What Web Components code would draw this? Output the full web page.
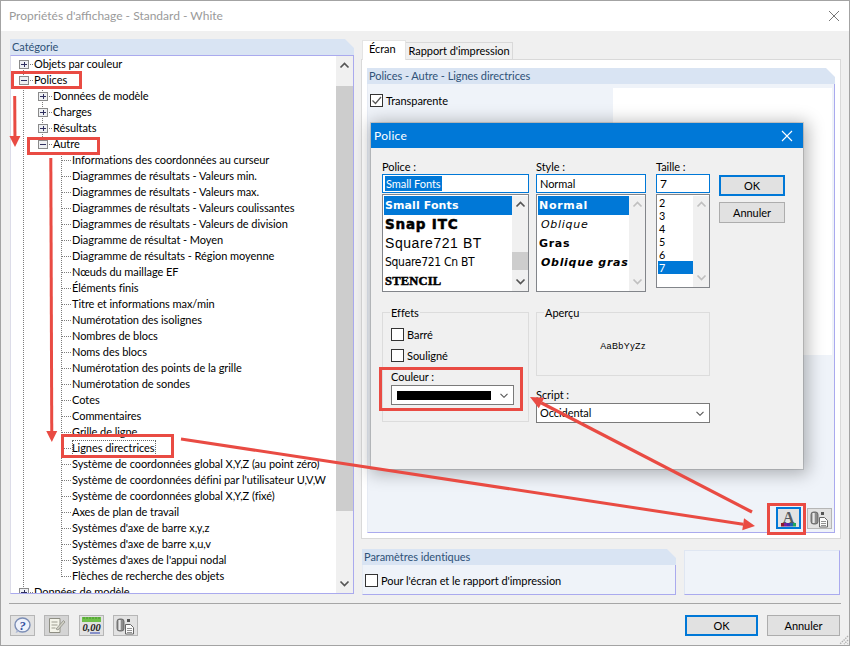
<!DOCTYPE html>
<html lang="fr">
<head>
<meta charset="utf-8">
<title>Propriétés d'affichage</title>
<style>
  html,body{margin:0;padding:0;background:#f0f0f0}
  body{font:11px/16px Lato,"Liberation Sans",sans-serif;letter-spacing:-.05px;color:#000}
</style>
</head>
<body>
<rf-window>
  <span slot="title">Propriétés d'affichage - Standard - White</span>

  <rf-tree slot="tree" heading="Catégorie">
    <rf-tree-row level="0" kind="plus" first>Objets par couleur</rf-tree-row>
    <rf-tree-row level="0" kind="minus">Polices</rf-tree-row>
    <rf-tree-row level="1" kind="plus">Données de modèle</rf-tree-row>
    <rf-tree-row level="1" kind="plus">Charges</rf-tree-row>
    <rf-tree-row level="1" kind="plus">Résultats</rf-tree-row>
    <rf-tree-row level="1" kind="minus" last>Autre</rf-tree-row>
    <rf-tree-row level="2">Informations des coordonnées au curseur</rf-tree-row>
    <rf-tree-row level="2">Diagrammes de résultats - Valeurs min.</rf-tree-row>
    <rf-tree-row level="2">Diagrammes de résultats - Valeurs max.</rf-tree-row>
    <rf-tree-row level="2">Diagrammes de résultats - Valeurs coulissantes</rf-tree-row>
    <rf-tree-row level="2">Diagrammes de résultats - Valeurs de division</rf-tree-row>
    <rf-tree-row level="2">Diagramme de résultat - Moyen</rf-tree-row>
    <rf-tree-row level="2">Diagramme de résultats - Région moyenne</rf-tree-row>
    <rf-tree-row level="2">Nœuds du maillage EF</rf-tree-row>
    <rf-tree-row level="2">Éléments finis</rf-tree-row>
    <rf-tree-row level="2">Titre et informations max/min</rf-tree-row>
    <rf-tree-row level="2">Numérotation des isolignes</rf-tree-row>
    <rf-tree-row level="2">Nombres de blocs</rf-tree-row>
    <rf-tree-row level="2">Noms des blocs</rf-tree-row>
    <rf-tree-row level="2">Numérotation des points de la grille</rf-tree-row>
    <rf-tree-row level="2">Numérotation de sondes</rf-tree-row>
    <rf-tree-row level="2">Cotes</rf-tree-row>
    <rf-tree-row level="2">Commentaires</rf-tree-row>
    <rf-tree-row level="2">Grille de ligne</rf-tree-row>
    <rf-tree-row level="2" focus>Lignes directrices</rf-tree-row>
    <rf-tree-row level="2">Système de coordonnées global X,Y,Z (au point zéro)</rf-tree-row>
    <rf-tree-row level="2">Système de coordonnées défini par l'utilisateur U,V,W</rf-tree-row>
    <rf-tree-row level="2">Système de coordonnées global X,Y,Z (fixé)</rf-tree-row>
    <rf-tree-row level="2">Axes de plan de travail</rf-tree-row>
    <rf-tree-row level="2">Systèmes d'axe de barre x,y,z</rf-tree-row>
    <rf-tree-row level="2">Systèmes d'axe de barre x,u,v</rf-tree-row>
    <rf-tree-row level="2">Systèmes d'axes de l'appui nodal</rf-tree-row>
    <rf-tree-row level="2" last>Flèches de recherche des objets</rf-tree-row>
    <rf-tree-row level="0" kind="plus" root-last>Données de modèle</rf-tree-row>
  </rf-tree>

  <rf-tabs slot="tabs">
    <span slot="active">Écran</span>
    <span slot="other">Rapport d'impression</span>
    <rf-group heading="Polices - Autre - Lignes directrices" fill>
      <rf-screen-page></rf-screen-page>
    </rf-group>
  </rf-tabs>

  <rf-group slot="same" heading="Paramètres identiques">
    <rf-check style="margin:9px 0 8px 2px">Pour l'écran et le rapport d'impression</rf-check>
  </rf-group>

  <rf-icon-button slot="tools" icon="help"></rf-icon-button>
  <rf-icon-button slot="tools" icon="edit" dim></rf-icon-button>
  <rf-icon-button slot="tools" icon="units"></rf-icon-button>
  <rf-icon-button slot="tools" icon="copy"></rf-icon-button>

  <rf-button slot="actions" primary wide>OK</rf-button>
  <rf-button slot="actions" wide>Annuler</rf-button>

  <rf-font-dialog slot="overlay"></rf-font-dialog>
  <rf-annotations slot="overlay"></rf-annotations>
</rf-window>

<script>
function el(name, build){
  customElements.define(name, class extends HTMLElement{
    constructor(){super();this.attachShadow({mode:'open'});}
    connectedCallback(){ if(!this._done){this._done=true;this.shadowRoot.innerHTML=build(this);} }
  });
}
const chev = (up,color='#555') => `<svg style="display:block" width="11" height="7" viewBox="0 0 11 7"><path d="${up?'M1.5 5.5 5.5 1.5 9.5 5.5':'M1.5 1.5 5.5 5.5 9.5 1.5'}" fill="none" stroke="${color}" stroke-width="1.7"/></svg>`;
const chevThin = `<svg style="display:block;flex:none" width="8" height="5" viewBox="0 0 8 5"><path d="M.5 .8 4 4.300 7.500 .8" fill="none" stroke="#555" stroke-width="1.1"/></svg>`;

el('rf-window', () => `<style>
  :host{display:block;position:relative;width:850px;height:646px;box-sizing:border-box;border:1px solid #a3a3a3;background:#f0f0f0;overflow:hidden}
  .title{height:30px;background:#fff;display:flex;align-items:center;justify-content:space-between;padding:0 9px 0 8px;color:#9a9a9a;font-size:12px;letter-spacing:0}
  .main{display:flex;gap:7px;height:572px;box-sizing:border-box;padding:8px 8px 0 9px}
  .right{width:480px;display:flex;flex-direction:column}
  .bottom{display:flex;gap:8px;margin-top:10px;padding-left:1px}
  .bottom ::slotted([slot=same]){width:314px;height:46px}
  .spare{width:156px;height:45px;margin-top:1px;box-sizing:border-box;background:#eff3f9;border-right:1px solid #aaaaee;border-bottom:1px solid #aaaaee;border-left:1px solid #dfe6f2;border-top:1px solid #dfe6f2}
  .foot{margin:0 8px;border-top:1px solid #a6a6a6;height:41px;box-sizing:border-box;padding:11px 1px 0 1px;display:flex;justify-content:space-between;width:832px}
  .tools{display:flex;gap:9.4px}
  .actions{display:flex;gap:9px}
  .grip{position:absolute;right:0;bottom:0}
</style>
<div class="title"><slot name="title"></slot>
  <svg width="12" height="12" viewBox="0 0 12 12"><path d="M1 1 11 11M11 1 1 11" stroke="#777" stroke-width="1"/></svg></div>
<div class="main"><slot name="tree"></slot>
  <div class="right"><slot name="tabs"></slot>
    <div class="bottom"><slot name="same"></slot><div class="spare"></div></div>
  </div>
</div>
<div class="foot"><div class="tools"><slot name="tools"></slot></div><div class="actions"><slot name="actions"></slot></div></div>
<svg class="grip" width="11" height="11" viewBox="0 0 11 11"><path d="M10 2 2 10M10 6 6 10M10 9.500 9.500 10" stroke="#b0b0b0" stroke-width="1.400" stroke-dasharray="1.400 1"/></svg>
<slot name="overlay"></slot>`);

el('rf-tree', h => `<style>
  :host{display:block;width:344px;height:555px;flex:none}
  .head{height:16px;background:#d9e4f3;color:#2f5278;padding-left:2px;line-height:16px;clip-path:polygon(0 0,calc(100% - 9px) 0,100% 9px,100% 100%,0 100%)}
  .body{height:539px;box-sizing:border-box;background:#fff;border:1px solid #aaaaee;border-left-color:#dcdce8;display:flex;overflow:hidden}
  .rows{flex:1;overflow:hidden;min-width:0}
  .bar{width:17px;background:#f0f0f0;display:flex;flex-direction:column;align-items:center;flex:none}
  .up{margin-top:6px;display:block;height:7px}
  .thumb{align-self:stretch;height:425px;background:#cdcdcd;margin-top:17px;flex:none}
  .fill{flex:1}
  .down{margin-bottom:6px;display:block;height:7px}
</style>
<div class="head">${h.getAttribute('heading')}</div>
<div class="body"><div class="rows"><slot></slot></div>
  <div class="bar"><span class="up">${chev(true)}</span><div class="thumb"></div><div class="fill"></div><span class="down">${chev(false)}</span></div>
</div>`);

el('rf-tree-row', h => {
  const level = +h.getAttribute('level'), kind = h.getAttribute('kind');
  const w = [23,42,61][level];
  let g = '';
  const v = (x,y1,y2)=>`<path d="M${x+.5} ${y1}V${y2}" stroke="#7d7d7d" stroke-dasharray="1 1"/>`;
  const hz = (x1,x2)=>`<path d="M${x1} 8.500H${x2}" stroke="#7d7d7d" stroke-dasharray="1 1"/>`;
  if(level>0) g += v(12,0,16);
  else g += h.hasAttribute('root-last') ? v(12,0,8) : v(12,h.hasAttribute('first')?12:0,16);
  if(level===1) g += v(31,0,h.hasAttribute('last')?8:16);
  if(level===2) g += v(50,0,h.hasAttribute('last')?9:16) + hz(51,60);
  if(level<2){
    const c=[12,31][level];
    g += hz(c+5,c+11);
    g += `<rect x="${c-4+.5}" y="4.500" width="9" height="8" fill="#eef0f3" stroke="#8a8a8a"/>`;
    g += `<path d="M${c-2} 8.500h6" stroke="#303060"/>`;
    if(kind==='plus') g += `<path d="M${c+1.5} 6v5" stroke="#303060"/>`;
  }
  return `<style>
    :host{display:flex;height:16px;align-items:center;white-space:nowrap}
    svg{flex:none;display:block}
    .t{height:16px;line-height:16px;${h.hasAttribute('focus')?'outline:1px dotted #666;outline-offset:-1px;padding-right:1px':''}}
  </style><svg width="${w}" height="16">${g}</svg><span class="t"><slot></slot></span>`;
});

el('rf-tabs', h => `<style>
  :host{display:block;height:500px}
  .tabs{display:flex;height:21px;padding-left:1px;align-items:flex-end;position:relative;z-index:1;margin-bottom:-1px}
  .a{height:20px;width:44px;box-sizing:border-box;background:#fff;padding:0 0 0 6px;line-height:15px;border:1px solid #e4e4e4;border-bottom:none}
  .o{height:17px;width:107px;box-sizing:border-box;background:#f0f0f0;border:1px solid #d9d9d9;border-left:none;border-bottom:none;text-align:center;line-height:16px;margin-bottom:1px;white-space:nowrap}
  .panel{height:480px;box-sizing:border-box;background:#fff;border:1px solid #d9d9d9;padding:8px 5px 5px}
  ::slotted(rf-group){height:100%}
</style>
<div class="tabs"><div class="a"><slot name="active"></slot></div><div class="o"><slot name="other"></slot></div></div>
<div class="panel"><slot></slot></div>`);

el('rf-group', h => `<style>
  :host{display:flex;flex-direction:column;box-sizing:border-box}
  .head{height:16px;flex:none;background:#d9e4f3;color:#2f5278;line-height:16px;padding-left:2px;clip-path:polygon(0 0,calc(100% - 9px) 0,100% 9px,100% 100%,0 100%)}
  .body{flex:1;min-height:0;background:#eff3f9;border-right:1px solid #aaaaee;border-bottom:1px solid #aaaaee;border-left:1px solid #e6ebf4;display:flex;flex-direction:column}
</style><div class="head">${h.getAttribute('heading')}</div><div class="body"><slot></slot></div>`);

el('rf-check', h => `<style>
  :host{display:flex;align-items:center;gap:3px;height:13px;white-space:nowrap}
  .b{width:11px;height:11px;border:1px solid #333;background:#fff;flex:none;display:flex}
  .l{line-height:13px}
</style><span class="b">${h.hasAttribute('checked')?'<svg width="11" height="11" viewBox="0 0 11 11"><path d="M1.500 5.500 4.500 8.500 10 2" fill="none" stroke="#555" stroke-width="1.200"/></svg>':''}</span><span class="l"><slot></slot></span>`);

el('rf-screen-page', () => `<style>
  :host{display:flex;flex-direction:column;flex:1}
  .top{display:flex;height:267px;margin-top:4px;padding:0 2px;justify-content:space-between}
  .left{padding-top:6px}
  .white{width:219px;background:#fff}
  .fill{flex:1}
  .btns{display:flex;gap:6px;justify-content:flex-end;padding:0 2px 3px 0;align-items:flex-end}
</style>
<div class="top"><div class="left"><rf-check checked>Transparente</rf-check></div><div class="white"></div></div>
<div class="fill"></div>
<div class="btns"><rf-icon-button icon="font"></rf-icon-button><rf-icon-button icon="copy"></rf-icon-button></div>`);

const icons = {
  help:`<svg width="19" height="17" viewBox="0 0 19 17"><ellipse cx="9.500" cy="8" rx="7.500" ry="7" fill="#eef2fb" stroke="#7b8db5" stroke-width="1.400"/><path d="M4 13l-1.500 3 4-1.500z" fill="#aab6d2"/><text x="9.500" y="12.500" text-anchor="middle" font-family="Liberation Serif" font-style="italic" font-weight="700" font-size="13" fill="#3450a0">?</text></svg>`,
  edit:`<svg width="19" height="17" viewBox="0 0 19 17"><path d="M2.500 1.500h10.500v14h-10.500z" fill="#f4f4ea" stroke="#8f8f84"/><path d="M4.500 5h6M4.500 8h6M4.500 11h4" stroke="#9c9c90"/><path d="M9 12 16.500 3.500 18 5 11 13z" fill="#cfcfc4" stroke="#85857c" stroke-width=".7"/></svg>`,
  units:`<svg width="23" height="19" viewBox="0 0 23 19"><rect x="2" y="1" width="19" height="5" fill="#6fbf4a"/><path d="M4 1v2M7 1v2M10 1v2M13 1v2M16 1v2M19 1v2" stroke="#3b8a23" stroke-width=".8"/><text x="11.500" y="15" text-anchor="middle" font-family="Liberation Serif" font-style="italic" font-weight="700" font-size="10.500" fill="#222">0,00</text><path d="M10 17h10" stroke="#2a3fb0"/></svg>`,
  copy:`<svg width="21" height="18" viewBox="0 0 21 18"><rect x="2" y="2" width="7" height="12" rx="2.500" fill="#8b8b8b" stroke="#555" stroke-width=".8"/><rect x="3.500" y="3" width="2.200" height="10" fill="#e8e8e8"/><path d="M10.500 7.500h5l3 3v6.500h-8z" fill="#fbfbfb" stroke="#666"/><path d="M12 11.500h5M12 13.500h5M12 15.500h5" stroke="#777" stroke-width=".8"/><rect x="12" y="2" width="3" height="3" fill="#555"/></svg>`,
  font:`<svg width="21" height="17" viewBox="0 0 21 17"><text x="10.500" y="12.500" text-anchor="middle" font-family="Liberation Serif" font-weight="700" font-size="16" fill="#555a60">A</text><rect x="3" y="13" width="3" height="3.500" fill="#8e1a2e"/><rect x="6" y="13" width="3" height="3.500" fill="#7a1f9c"/><rect x="9" y="13" width="3" height="3.500" fill="#4a2aa8"/><rect x="12" y="13" width="3" height="3.500" fill="#1f5fb0"/><rect x="15" y="13" width="3" height="3.500" fill="#1fa55c"/></svg>`
};
el('rf-icon-button', h => {
  const ic=h.getAttribute('icon'), focus=ic==='font';
  return `<style>
    :host{display:flex;width:25px;height:${focus?22:21}px;box-sizing:border-box;align-items:center;justify-content:center;
      background:${h.hasAttribute('dim')?'#d4d4d4':'#e2e2e2'};border:${focus?'2px solid #0078d7':'1px solid #b6b6b6'};flex:none;overflow:hidden}
    svg{display:block;flex:none}
  </style>${icons[ic]}`;
});

el('rf-button', h => `<style>
  :host{display:flex;align-items:center;justify-content:center;box-sizing:border-box;height:21px;width:${h.hasAttribute('wide')?'73px':'66px'};
    background:#e1e1e1;border:${h.hasAttribute('primary')?'2px solid #0078d7':'1px solid #adadad'};font-size:11px}
</style><slot></slot>`);

el('rf-listbox', h => {
  const disabled = h.getAttribute('bar')!=='active';
  return `<style>
    :host{display:flex;box-sizing:border-box;border:1px solid #82858a;background:#fff;overflow:hidden;padding:1px 0 0 1px}
    .items{flex:1;min-width:0;overflow:hidden}
    .bar{width:16px;flex:none;background:#f0f0f0;display:flex;flex-direction:column;align-items:center}
    .bar .t{margin-top:5px;height:7px;display:block}
    .bar .th{align-self:stretch;height:18px;background:#cdcdcd;margin-top:44px;flex:none}
    .fill{flex:1}
    .bar .b{margin-bottom:6px;display:block;height:7px}
  </style><div class="items"><slot></slot></div>
  <div class="bar"><span class="t">${chev(true,disabled?'#c0c0c0':'#555')}</span>${disabled?'':'<div class="th"></div>'}<div class="fill"></div><span class="b">${chev(false,disabled?'#c0c0c0':'#555')}</span></div>`;
});

el('rf-combo', h => `<style>
  :host{display:flex;box-sizing:border-box;height:20px;border:1px solid #7a7a7a;background:#fff;align-items:center;justify-content:space-between;padding:0 5px 0 3px}
  span{display:flex;align-items:center;flex:1;min-width:0}
</style><span><slot></slot></span>${chevThin}`);

el('rf-font-dialog', () => `<style>
  :host{position:absolute;left:370px;top:122px;width:432px;height:346px;background:#f0f0f0;box-shadow:2px 2px 16px 3px rgba(0,0,0,.28),0 0 0 1px rgba(120,120,120,.25);z-index:5;display:block}
  .title{height:25px;background:#0078d7;color:#fff;display:flex;align-items:center;justify-content:space-between;padding:0 10px 0 3px;font-size:12px;letter-spacing:.3px}
  .body{padding:11px 0 0 11px}
  .top{display:flex}
  .c1{width:147px}
  .c2{margin-left:7px;width:110px}
  .c3{margin-left:10px;width:54px}
  .c4{margin-left:9px;width:66px;padding-top:16px}
  label{display:block;height:15px;line-height:15px}
  .in{height:19px;box-sizing:border-box;border:1px solid #0078d7;background:#fff;margin-bottom:1px;padding-left:2px;line-height:17px;display:flex;align-items:center}
  .in b{font-weight:400;background:#0078d7;color:#fff;padding:0 1px;line-height:15px}
  .in span{padding-left:1px}
  .f{height:98px}
  .t{height:94px}
  .it{height:19px;line-height:19px;white-space:nowrap;overflow:hidden;padding-left:1px}
  .sel{background:#0078d7;color:#fff}
  .px{font:700 11px/19px "DejaVu Sans",sans-serif;letter-spacing:.1px}
  .wx{letter-spacing:.7px}
  .i{font-style:italic}
  .num{height:13px;line-height:13px;font-size:10.800px;padding-left:1px}
  .c4 rf-button+rf-button{margin-top:6px}
  .low{display:flex;margin-top:13px}
  fieldset{margin:0;box-sizing:border-box;border:1px solid #dcdcdc;min-width:0;padding:0 8px}
  legend{padding:0 1px;line-height:15px;height:15px;margin-left:-1px}
  .eff{width:147px;height:117px}
  .eff rf-check{margin-top:8px}
  .eff label{margin-top:7px;height:15px}
  .eff rf-combo{width:123px;margin-top:1px}
  .sw{height:9px;width:94px;background:#000;margin-left:2px}
  .rc{margin-left:7px;width:174px}
  .ap{height:71px;display:block}
  .ap div{text-align:center;font:9px/1 "Liberation Sans",sans-serif;letter-spacing:.4px;margin-top:22px}
  .rc label{margin-top:11px;height:16px}
</style>
<div class="title">Police<svg width="12" height="12" viewBox="0 0 12 12"><path d="M1 1 11 11M11 1 1 11" stroke="#fff" stroke-width="1.100"/></svg></div>
<div class="body">
  <div class="top">
    <div class="c1"><label>Police :</label><div class="in"><b>Small Fonts</b></div>
      <rf-listbox class="f" bar="active">
        <div class="it sel px">Small Fonts</div>
        <div class="it" style="font:900 13.500px/19px 'DejaVu Sans';-webkit-text-stroke:.5px #000;letter-spacing:.8px;padding-left:1px">Snap ITC</div>
        <div class="it" style="font:14px/19px 'Liberation Sans';letter-spacing:.55px;">Square721 BT</div>
        <div class="it" style="font:12px/19px 'DejaVu Sans Condensed','Liberation Sans Narrow';letter-spacing:-.3px">Square721 Cn BT</div>
        <div class="it" style="font:700 12.500px/19px 'Liberation Serif';-webkit-text-stroke:.5px #000;letter-spacing:.2px">STENCIL</div>
      </rf-listbox></div>
    <div class="c2"><label>Style :</label><div class="in"><span>Normal</span></div>
      <rf-listbox class="f">
        <div class="it sel px wx">Normal</div>
        <div class="it px i wx" style="padding-left:3px;font-weight:400">Oblique</div>
        <div class="it px wx">Gras</div>
        <div class="it px i wx" style="padding-left:3px">Oblique gras</div>
      </rf-listbox></div>
    <div class="c3"><label>Taille :</label><div class="in"><span style="font-size:12px">7</span></div>
      <rf-listbox class="t">
        <div class="num">2</div><div class="num">3</div><div class="num">4</div><div class="num">5</div><div class="num">6</div><div class="num sel">7</div>
      </rf-listbox></div>
    <div class="c4"><rf-button primary>OK</rf-button><rf-button>Annuler</rf-button></div>
  </div>
  <div class="low">
    <fieldset class="eff"><legend>Effets</legend>
      <rf-check>Barré</rf-check>
      <rf-check>Souligné</rf-check>
      <label>Couleur :</label>
      <rf-combo><div class="sw"></div></rf-combo>
    </fieldset>
    <div class="rc">
      <fieldset class="ap"><legend>Aperçu</legend><div>AaBbYyZz</div></fieldset>
      <label>Script :</label>
      <rf-combo>Occidental</rf-combo>
    </div>
  </div>
</div>`);

el('rf-annotations', () => {
  const R = '#e94b43';
  const rect=(x,y,w,h)=>`<rect x="${x}" y="${y}" width="${w}" height="${h}" fill="none" stroke="${R}" stroke-width="3"/>`;
  function arrow(x1,y1,x2,y2,hl,hw,w){
    const a=Math.atan2(y2-y1,x2-x1),c=Math.cos(a),s=Math.sin(a);
    const bx=x2-c*hl,by=y2-s*hl,nx=-s,ny=c;
    return `<path d="M${x1} ${y1}L${bx} ${by}" stroke="${R}" stroke-width="${w}" fill="none"/><polygon fill="${R}" points="${x2},${y2} ${bx+nx*hw},${by+ny*hw} ${bx-nx*hw},${by-ny*hw}"/>`;
  }
  return `<style>:host{position:absolute;left:-1px;top:-1px;width:850px;height:646px;z-index:10;pointer-events:none;display:block}svg{display:block}</style>
  <svg width="850" height="646" viewBox="0 0 850 646">
    ${rect(12.5,72.5,68,15)}
    ${rect(28.5,138.5,70,15)}
    ${rect(62.5,435.5,110,21)}
    ${rect(380.5,368.5,141,41)}
    ${rect(768.5,504.5,36,29)}
    ${arrow(14.7,96,15,147,11,5.5,3)}
    ${arrow(50.8,158,51.8,442,11,5.5,3)}
    ${arrow(181,439,755,526,12,6,3)}
    ${arrow(752,512,530,397,13,6,3.2)}
  </svg>`;
});
</script>
</body>
</html>
